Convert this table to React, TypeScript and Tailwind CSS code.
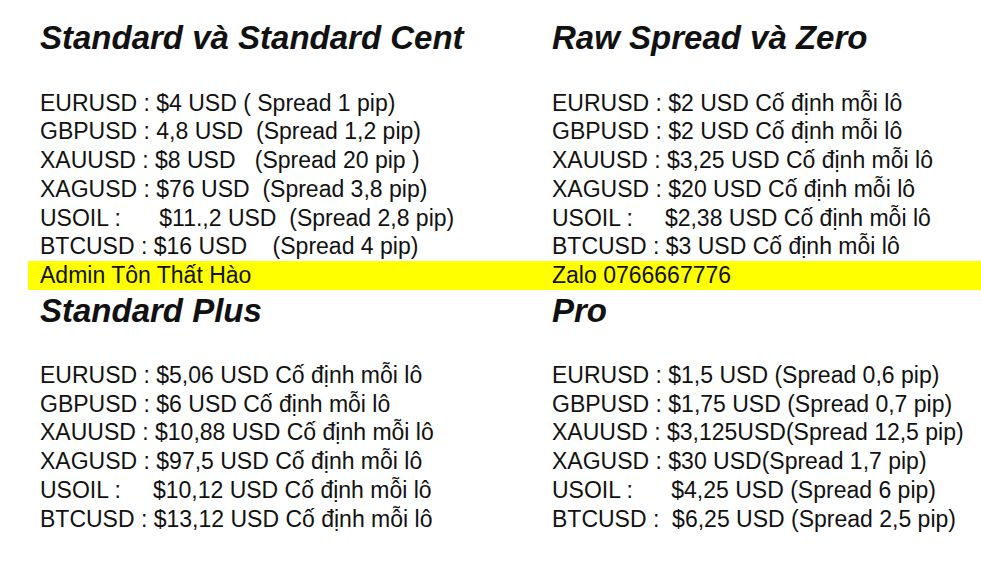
import React from "react";

type Section = { title: string; lines: string[] };

const top: Section[] = [
  {
    title: "Standard và Standard Cent",
    lines: [
      "EURUSD : $4 USD ( Spread 1 pip)",
      "GBPUSD : 4,8 USD  (Spread 1,2 pip)",
      "XAUUSD : $8 USD   (Spread 20 pip )",
      "XAGUSD : $76 USD  (Spread 3,8 pip)",
      "USOIL :      $11.,2 USD  (Spread 2,8 pip)",
      "BTCUSD : $16 USD    (Spread 4 pip)",
    ],
  },
  {
    title: "Raw Spread và Zero",
    lines: [
      "EURUSD : $2 USD Cố định mỗi lô",
      "GBPUSD : $2 USD Cố định mỗi lô",
      "XAUUSD : $3,25 USD Cố định mỗi lô",
      "XAGUSD : $20 USD Cố định mỗi lô",
      "USOIL :     $2,38 USD Cố định mỗi lô",
      "BTCUSD : $3 USD Cố định mỗi lô",
    ],
  },
];

const bottom: Section[] = [
  {
    title: "Standard Plus",
    lines: [
      "EURUSD : $5,06 USD Cố định mỗi lô",
      "GBPUSD : $6 USD Cố định mỗi lô",
      "XAUUSD : $10,88 USD Cố định mỗi lô",
      "XAGUSD : $97,5 USD Cố định mỗi lô",
      "USOIL :     $10,12 USD Cố định mỗi lô",
      "BTCUSD : $13,12 USD Cố định mỗi lô",
    ],
  },
  {
    title: "Pro",
    lines: [
      "EURUSD : $1,5 USD (Spread 0,6 pip)",
      "GBPUSD : $1,75 USD (Spread 0,7 pip)",
      "XAUUSD : $3,125USD(Spread 12,5 pip)",
      "XAGUSD : $30 USD(Spread 1,7 pip)",
      "USOIL :      $4,25 USD (Spread 6 pip)",
      "BTCUSD :  $6,25 USD (Spread 2,5 pip)",
    ],
  },
];

function Block({ s, gap }: { s: Section; gap: string }) {
  return (
    <div>
      <h2 className="text-[33px] leading-[40px] font-bold italic">{s.title}</h2>
      <ul className={`${gap} text-[23px] leading-[28.7px] whitespace-pre`}>
        {s.lines.map((l, i) => (
          <li key={i}>{l}</li>
        ))}
      </ul>
    </div>
  );
}

export default function App() {
  return (
    <div className="w-[981px] h-[573px] bg-white text-[#111] font-['Liberation_Sans',Arial,sans-serif] overflow-hidden">
      <div className="pt-[17.6px] pl-[40px] grid grid-cols-[512px_1fr]">
        {top.map((s) => (
          <Block key={s.title} s={s} gap="mt-[31.2px]" />
        ))}
      </div>
      <div className="ml-[28px] pl-[12px] bg-[#ffff00] grid grid-cols-[512px_1fr] h-[29px] text-[23px] leading-[29px] whitespace-pre">
        <div>Admin Tôn Thất Hào</div>
        <div>Zalo 0766667776</div>
      </div>
      <div className="pt-[1px] pl-[40px] grid grid-cols-[512px_1fr]">
        {bottom.map((s) => (
          <Block key={s.title} s={s} gap="mt-[30px]" />
        ))}
      </div>
    </div>
  );
}
